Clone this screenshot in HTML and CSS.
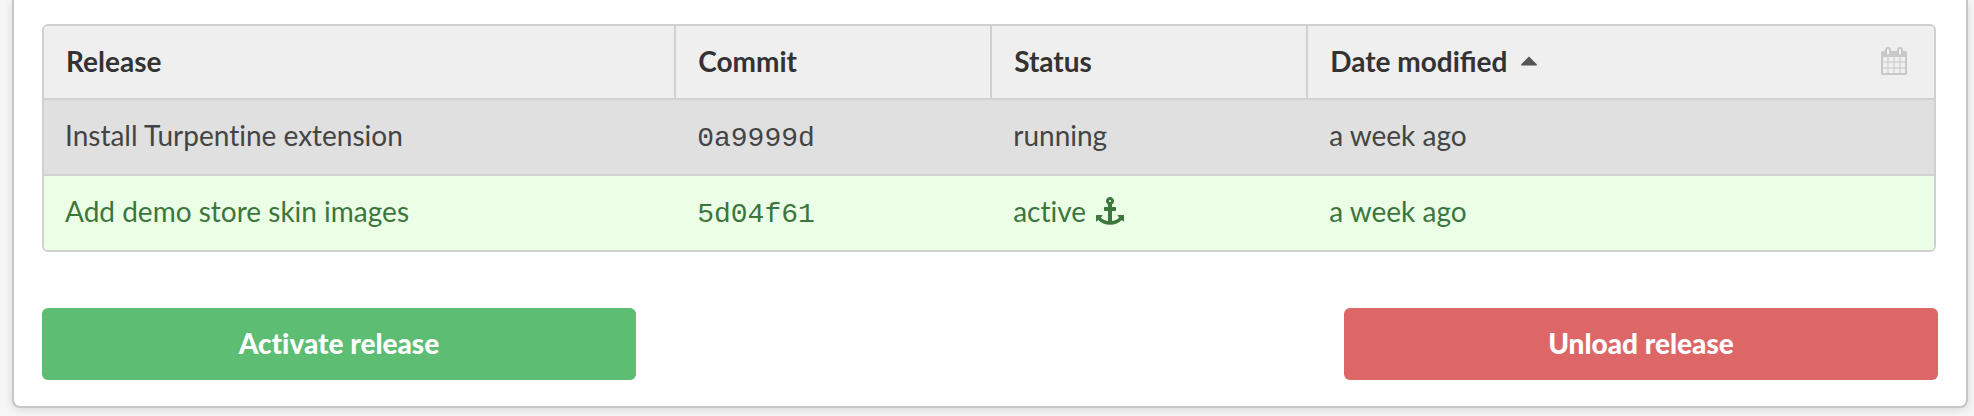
FILE: index.html
```html
<!DOCTYPE html>
<html lang="en">
<head>
<meta charset="utf-8">
<title>Releases</title>
<link rel="stylesheet" href="styles.css">
</head>
<body>
<main class="card">
  <div class="table-frame">
    <table class="releases">
      <colgroup><col class="col-release"><col class="col-narrow"><col class="col-narrow"><col></colgroup>
      <thead>
        <tr>
          <th scope="col">Release</th>
          <th scope="col">Commit</th>
          <th scope="col">Status</th>
          <th scope="col" aria-sort="ascending">
            <div class="date-head">
              <button type="button" class="sort">Date modified<svg class="caret" viewBox="0 0 16 10" aria-hidden="true"><path d="M8 0.500 15.500 8Q16.500 9.500 15 9.500H1Q-0.500 9.500 0.500 8Z"/></svg></button>
              <button type="button" class="calendar" aria-label="Toggle date format"><svg class="icon" viewBox="0 0 1792 1792" aria-hidden="true"><path d="M192 1664h288v-288h-288v288zm352 0h320v-288h-320v288zm-352-352h288v-320h-288v320zm352 0h320v-320h-320v320zm-352-384h288v-288h-288v288zm736 736h320v-288h-320v288zm-384-736h320v-288h-320v288zm768 736h288v-288h-288v288zm-384-352h320v-320h-320v320zm-352-864v-288q0-13-9.500-22.500t-22.500-9.500h-64q-13 0-22.500 9.500t-9.500 22.500v288q0 13 9.500 22.500t22.500 9.500h64q13 0 22.500-9.500t9.500-22.500zm736 864h288v-320h-288v320zm-384-384h320v-288h-320v288zm384 0h288v-288h-288v288zm32-480v-288q0-13-9.500-22.500t-22.500-9.500h-64q-13 0-22.500 9.500t-9.500 22.500v288q0 13 9.500 22.500t22.500 9.500h64q13 0 22.500-9.500t9.500-22.500zm384-64v1280q0 52-38 90t-90 38h-1408q-52 0-90-38t-38-90v-1280q0-52 38-90t90-38h128v-96q0-66 47-113t113-47h64q66 0 113 47t47 113v96h384v-96q0-66 47-113t113-47h64q66 0 113 47t47 113v96h128q52 0 90 38t38 90z"/></svg></button>
            </div>
          </th>
        </tr>
      </thead>
      <tbody>
        <tr class="selected">
          <td>Install Turpentine extension</td>
          <td class="hash">0a9999d</td>
          <td>running</td>
          <td>a week ago</td>
        </tr>
        <tr class="active">
          <td>Add demo store skin images</td>
          <td class="hash">5d04f61</td>
          <td><span class="status">active<svg class="icon" viewBox="0 0 1792 1792" aria-hidden="true"><path d="M960 256q0-26-19-45t-45-19-45 19-19 45 19 45 45 19 45-19 19-45zm832 928v352q0 22-20 30-8 2-12 2-12 0-23-9l-93-93q-119 143-318.500 226.500t-429.500 83.500-429.500-83.500-318.500-226.500l-93 93q-9 9-23 9-4 0-12-2-20-8-20-30v-352q0-14 9-23t23-9h352q22 0 30 20 8 19-7 35l-100 100q67 91 189.500 153.500t271.500 82.500v-647h-192q-26 0-45-19t-19-45v-128q0-26 19-45t45-19h192v-163q-58-34-93-92.500t-35-128.500q0-106 75-181t181-75 181 75 75 181q0 70-35 128.500t-93 92.500v163h192q26 0 45 19t19 45v128q0 26-19 45t-45 19h-192v647q149-20 271.500-82.500t189.500-153.500l-100-100q-15-16-7-35 8-20 30-20h352q14 0 23 9t9 23z"/></svg></span></td>
          <td>a week ago</td>
        </tr>
      </tbody>
    </table>
  </div>
  <div class="actions">
    <button type="button" class="btn btn-activate">Activate release</button>
    <button type="button" class="btn btn-unload">Unload release</button>
  </div>
</main>
</body>
</html>
```
FILE: styles.css
```css
* {
  box-sizing: border-box;
}

body {
  margin: 0;
  padding: 0 6px 8px 12px;
  background: #f6f6f6;
  color: #444;
  font: 28px/36px Lato, "Open Sans", sans-serif;
}

button {
  margin: 0;
  padding: 0;
  border: 0;
  background: none;
  color: inherit;
  font: inherit;
  cursor: pointer;
}

.card {
  padding: 24px 28px 26px;
  border: 2px solid #c6c6c6;
  border-top: 0;
  border-radius: 0 0 8px 8px;
  background: #fff;
  box-shadow: 0 2px 10px rgba(0, 0, 0, 0.12);
}

.table-frame {
  margin-right: 2px;
  border: 2px solid #d0d0d0;
  border-radius: 6px;
  overflow: hidden;
}

.releases {
  width: 100%;
  border-collapse: separate;
  border-spacing: 0;
  table-layout: fixed;
}

.col-release {
  width: 33.45%;
}

.col-narrow {
  width: 16.72%;
}

th,
td {
  border-bottom: 2px solid #d2d2d2;
  text-align: left;
  vertical-align: baseline;
}

th {
  padding: 17px 22px 19px;
  border-right: 2px solid #d0d0d0;
  background: #efefef;
  color: #333;
  font-weight: 700;
}

th:last-child {
  border-right: 0;
}

td {
  padding: 17px 21px 21px;
  font-variant-ligatures: none;
}

tbody tr:last-child td {
  border-bottom: 0;
}

.selected td {
  background: #e0e0e0;
}

.active td {
  background: #ebffe6;
  color: #3c763d;
}

.releases .hash {
  padding-bottom: 17px;
  font-family: "Liberation Mono", monospace;
}

.date-head {
  display: flex;
  align-items: center;
  justify-content: space-between;
  padding-right: 4px;
}

.sort {
  display: flex;
  align-items: center;
  gap: 14px;
}

.caret {
  width: 16px;
  height: 10px;
  fill: #555;
}

.icon {
  display: block;
  width: 28px;
  height: 28px;
  fill: currentColor;
}

.calendar {
  color: #c8c8c8;
}

.status {
  display: flex;
  align-items: center;
  gap: 10px;
}

.actions {
  display: flex;
  justify-content: space-between;
  margin-top: 56px;
}

.btn {
  flex: 0 1 594px;
  padding: 17px 24px 19px;
  border-radius: 6px;
  color: #fff;
  font-weight: 900;
  font-variant-ligatures: none;
}

.btn-activate {
  background: #5cbd73;
}

.btn-unload {
  background: #dd6767;
}
```
